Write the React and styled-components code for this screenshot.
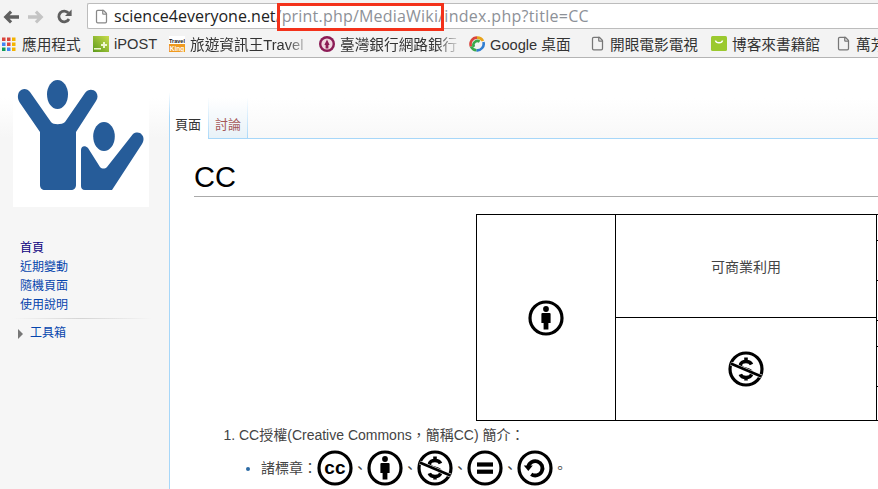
import React from 'react'
import styled, { createGlobalStyle } from 'styled-components'
import { File } from 'lucide-react'

const Global = createGlobalStyle`
  html, body { margin: 0; padding: 0; height: 100%; overflow: hidden; background: #fff; }
  body { font-family: "Liberation Sans", "Noto Sans CJK TC", sans-serif; }
`

const Page = styled.div`
  width: 878px;
  height: 489px;
  display: flex;
  flex-direction: column;
  overflow: hidden;
`

const Toolbar = styled.div`
  height: 32px;
  flex: none;
  display: flex;
  align-items: center;
  background: #f3f3f3;
`

const NavButton = styled.span`
  display: flex;
  flex: none;
  margin-top: 1px;
  width: ${(p) => p.$w}px;
  justify-content: center;
  color: ${(p) => (p.$off ? '#c4c4c4' : '#5f5f5f')};
`

const Omnibox = styled.div`
  position: relative;
  flex: 1;
  height: 26px;
  box-sizing: border-box;
  background: #fff;
  border: 1px solid #bcbcbc;
  border-right: none;
  border-radius: 2px 0 0 2px;
  display: flex;
  align-items: center;
  padding-left: 6px;
  font-family: "Open Sans", sans-serif;
  font-size: 16px;
  white-space: nowrap;
`

const Host = styled.span`
  color: #222;
  margin-left: 5px;
`

const Path = styled.span`
  color: #8d9198;
  letter-spacing: ${(p) => p.$track}px;
`

const Highlight = styled.span`
  position: absolute;
  left: 189px;
  top: -1px;
  width: 167px;
  height: 28px;
  box-sizing: border-box;
  border: 3px solid #f3321b;
`

const Bookmarks = styled.div`
  height: 26px;
  flex: none;
  display: flex;
  align-items: center;
  padding: 0 0 2px 1px;
  background: #f3f3f3;
  border-bottom: 1px solid #b4b4b4;
  box-sizing: border-box;
  overflow: hidden;
`

const Mark = styled.span`
  display: flex;
  flex: none;
  align-items: center;
  gap: 5px;
  width: ${(p) => p.$w}px;
  font-size: 14.67px;
  color: #333;
  white-space: nowrap;
  overflow: hidden;
  ${(p) => p.$fade && `
    -webkit-mask-image: linear-gradient(to right, #000 78%, transparent 95%);
    mask-image: linear-gradient(to right, #000 78%, transparent 95%);
  `}
`

const Body = styled.div`
  flex: 1;
  display: flex;
  min-height: 0;
`

const Sidebar = styled.aside`
  width: 170px;
  flex: none;
  box-sizing: border-box;
  background: linear-gradient(#fff 40px, #f6f6f6 80px);
  border-right: 1px solid;
  border-image: linear-gradient(#fff 35px, #a7d7f9 60px) 1;
  padding-top: 17px;
`

const Logo = styled.div`
  width: 136px;
  height: 132px;
  margin-left: 13px;
  background: #fff;
`

const Menu = styled.nav`
  margin: 32px 0 0 20px;
  display: flex;
  flex-direction: column;
  font-size: 12px;
  line-height: 19px;
`

const MenuLink = styled.span`
  color: ${(p) => (p.$visited ? '#0b0080' : '#0645ad')};
`

const Toolbox = styled.div`
  width: 140px;
  margin: 3px 0 0 -8px;
  padding: 6px 0 0 6px;
  box-sizing: border-box;
  background: linear-gradient(to right, transparent, #d4d4d4 50%, transparent) top / 100% 1px no-repeat;
  display: flex;
  align-items: center;
  gap: 7px;
  color: #0645ad;
`

const Triangle = styled.i`
  width: 0;
  height: 0;
  border-style: solid;
  border-width: 5px 0 5px 5px;
  border-color: transparent transparent transparent #777;
`

const Content = styled.main`
  flex: 1;
  min-width: 0;
  display: flex;
  flex-direction: column;
`

const TabBar = styled.div`
  height: 81px;
  flex: none;
  box-sizing: border-box;
  display: flex;
  align-items: flex-end;
  background: linear-gradient(#fff 40px, #f8f8f8 80px);
  border-bottom: 1px solid #a7d7f9;
`

const Tab = styled.span`
  box-sizing: border-box;
  padding: 18px 6px 0 ${(p) => (p.$active ? '5px' : '6px')};
  width: ${(p) => (p.$active ? '39px' : 'auto')};
  font-size: 13px;
  line-height: 18px;
  margin-bottom: ${(p) => (p.$active ? '-1px' : '0')};
  height: ${(p) => (p.$active ? '41px' : '40px')};
  color: ${(p) => (p.$active ? '#333' : '#a55858')};
  background: ${(p) => (p.$active ? '#fff' : 'linear-gradient(#fff, #e8f2f8)')};
  border-right: 1px solid;
  border-image: linear-gradient(#fff, #a7d7f9) 1;
`

const Article = styled.div`
  flex: 1;
  padding-left: 24px;
  min-width: 0;
  font-size: 14px;
  color: #444;
`

const Title = styled.h1`
  margin: 20px 0 17px;
  height: 37px;
  font-size: 29px;
  line-height: 36px;
  font-weight: normal;
  color: #000;
  border-bottom: 1px solid #aaa;
`

const Grid = styled.div`
  margin-left: 282px;
  width: 500px;
  height: 207px;
  box-sizing: border-box;
  border: 1px solid #000;
  display: grid;
  grid-template-columns: 138px 262px 1fr;
  grid-template-rows: 102px 1fr;
`

const Cell = styled.div`
  display: flex;
  align-items: center;
  justify-content: center;
  grid-column: ${(p) => p.$col};
  grid-row: ${(p) => p.$row};
  border-left: ${(p) => (p.$left ? '1px solid #000' : 'none')};
  border-right: ${(p) => (p.$right ? '1px solid #000' : 'none')};
  border-top: ${(p) => (p.$top ? '1px solid #000' : 'none')};
`

// next column of the table, only its row lines show at the window edge
const NextColumn = styled.div`
  grid-column: 3;
  grid-row: 1 / 3;
  display: flex;
  flex-direction: column;
`

const NextRow = styled.div`
  flex: none;
  height: ${(p) => p.$h}px;
  border-bottom: 1px solid #000;
`

const Notes = styled.ol`
  margin: 4px 0 0;
  padding: 0 0 0 45px;
  line-height: 20px;
`

const Bullets = styled.ul`
  margin: 5px 0 0;
  padding: 0 0 0 22px;
  list-style: disc;
  color: #2c6ba5;
`

const BulletRow = styled.li`
  height: 36px;
  line-height: 36px;
`

const BulletLine = styled.span`
  display: inline-flex;
  align-items: center;
  color: #444;
  vertical-align: top;
  white-space: nowrap;
`

const BadgeSvg = styled.svg`
  display: block;
  flex: none;
`

const Badge = ({ children }) => (
  <BadgeSvg width="36" height="36" viewBox="0 0 36 36">
    <circle cx="18" cy="18" r="16" fill="#fff" stroke="#000" strokeWidth="3.2" />
    {children}
  </BadgeSvg>
)

const Person = () => (
  <g fill="#000">
    <circle cx="18" cy="9" r="2.9" />
    <path d="M14.400 13h7.200a1 1 0 0 1 1 1v9h-2.200v6.600h-4.800V23h-2.200v-9a1 1 0 0 1 1-1z" />
  </g>
)

const NoDollar = () => (
  <g>
    <path
      d="M23.500 13.500c-.8-2-3-3-5.500-3-3 0-5.600 1.500-5.600 4 0 5 11.200 2.700 11.200 8 0 2.500-2.600 4-5.600 4-2.600 0-4.900-1-5.700-3.100M18 6.500v5M18 25.500v4"
      fill="none"
      stroke="#000"
      strokeWidth="3.600"
    />
    <path d="M2.700 12.500L33.500 25.500" stroke="#fff" strokeWidth="3.600" />
    <path d="M2.700 12.500L33.500 25.500" stroke="#000" strokeWidth="2.800" />
  </g>
)

const Equal = () => (
  <g fill="#000">
    <rect x="10" y="12.400" width="16" height="4.200" />
    <rect x="10" y="19.600" width="16" height="4.200" />
  </g>
)

const Share = () => (
  <g>
    <path d="M11.200 17a7.200 7.200 0 1 1 3 7.200" fill="none" stroke="#000" strokeWidth="3.800" />
    <path d="M6.800 15.400h9l-4.500 5.600z" fill="#000" />
  </g>
)

const CcText = () => (
  <text x="18" y="24" textAnchor="middle" fontSize="19" fontWeight="bold" letterSpacing="0.3" fontFamily="Liberation Sans" fill="#000">cc</text>
)

const LogoArt = () => (
  <svg width="136" height="132" viewBox="13 75 136 132" style={{ display: 'block' }}>
    <g fill="#265c99">
      <ellipse cx="57.500" cy="94.500" rx="10.500" ry="14.500" />
      <ellipse cx="104" cy="136.500" rx="10.800" ry="14.500" />
      <path d="M19 92c3-4 8-4 11 0l21 30c2 3 11 3 14 0l20-29c3-4 8-4 11-1 2 3 2 6 0 9L76 132v53c0 3-2 5-5 5H45c-3 0-5-2-5-5v-53L20 103c-2-3-3-7-1-11z" />
      <path d="M81 150c0-4 4-5 7-2l12 19c2 2 5 2 7 0l26-33c3-2 7-2 9 1 2 2 2 6 0 9l-30 46H85c-3 0-4-2-4-4z" />
    </g>
  </svg>
)

const BackArrow = () => (
  <svg width="16" height="14" viewBox="0 0 16 14" fill="currentColor">
    <path d="M7 0.500l2.200 2.200-2.600 2.600H16v3.400H6.600l2.600 2.600L7 13.500 0.500 7z" />
  </svg>
)

const ForwardArrow = () => (
  <svg width="16" height="14" viewBox="0 0 16 14" fill="currentColor">
    <path d="M9 0.500L6.800 2.700l2.600 2.600H0v3.400h9.400l-2.600 2.600L9 13.500 15.500 7z" />
  </svg>
)

const Reload = () => (
  <svg width="15" height="15" viewBox="0 0 15 15">
    <path d="M12 10a5.400 5.400 0 1 1-0.600-6" fill="none" stroke="currentColor" strokeWidth="2.800" />
    <path d="M14.600 0.500v6.600H8z" fill="currentColor" />
  </svg>
)

const AppsIcon = () => {
  const colors = ['#d9453d', '#d9453d', '#f4b400', '#4285f4', '#d9453d', '#f4b400', '#0f9d58', '#4285f4', '#f4b400']
  return (
    <svg width="16" height="14" viewBox="0 0 16 14">
      {colors.map((c, i) => (
        <rect key={i} x={1 + (i % 3) * 5} y={0.5 + Math.floor(i / 3) * 5} width="3.5" height="3.5" fill={c} />
      ))}
    </svg>
  )
}

const IpostIcon = () => (
  <svg width="16" height="16" viewBox="0 0 16 16">
    <defs>
      <linearGradient id="ipost" x1="0" y1="1" x2="1" y2="0">
        <stop offset="0" stopColor="#5c9a1c" />
        <stop offset="1" stopColor="#c9dc4c" />
      </linearGradient>
    </defs>
    <rect width="16" height="16" fill="url(#ipost)" />
    <path d="M1 12h7v1.500H1zM10 6h2v2h2v2h-2v2h-2v-2H8V8h2z" fill="#eef6cf" />
  </svg>
)

const TravelIcon = () => (
  <svg width="16" height="16" viewBox="0 0 16 16" fontFamily="Liberation Sans" fontWeight="bold" textAnchor="middle">
    <rect width="16" height="8" fill="#fff" />
    <rect y="8" width="16" height="8" fill="#ef9a1f" />
    <text x="8" y="6.500" fill="#222" fontSize="5.500">Travel</text>
    <text x="8" y="14.500" fill="#fff" fontSize="6.500">King</text>
  </svg>
)

const BankIcon = () => (
  <svg width="16" height="16" viewBox="0 0 16 16">
    <circle cx="8" cy="8" r="8" fill="#8c1c56" />
    <circle cx="8" cy="8" r="5.600" fill="#f0d8e0" />
    <path d="M8 3.500l2.600 5.500H9.400v3.500H6.600V9H5.400z" fill="#8c1c56" />
  </svg>
)

const GoogleRing = () => (
  <svg width="16" height="16" viewBox="0 0 16 16" fill="none" strokeWidth="2.600">
    <path d="M2 10.500A6.500 6.500 0 0 1 8 1.600" stroke="#d9453d" />
    <path d="M8 1.600a6.500 6.500 0 0 1 6 3.400" stroke="#e8a31a" />
    <path d="M14.400 6a6.500 6.500 0 0 1-7 8.300" stroke="#2f7dd1" />
    <path d="M7.400 14.300A6.500 6.500 0 0 1 2 10.500" stroke="#3aa84a" />
    <path d="M5 11a4 4 0 0 1 5.600-5.400" stroke="#3aa84a" />
  </svg>
)

const BooksIcon = () => (
  <svg width="16" height="15" viewBox="0 0 16 15">
    <rect width="16" height="15" rx="1.500" fill="#9bc92f" />
    <path d="M4.500 4.500c.5 3 6.500 3 7 0" fill="none" stroke="#fff" strokeWidth="1.500" />
  </svg>
)

export default function App() {
  return (
    <Page>
      <Global />
      <Toolbar>
        <NavButton $w={21}><BackArrow /></NavButton>
        <NavButton $w={29} $off><ForwardArrow /></NavButton>
        <NavButton $w={29}><Reload /></NavButton>
        <NavButton $w={8} />
        <Omnibox>
          <File size={15} color="#888" />
          <Host>science4everyone.net</Host>
          <Path $track={0.2}>/print.php/MediaWiki</Path>
          <Path $track={0.3}>/index.php?title=CC</Path>
          <Highlight />
        </Omnibox>
      </Toolbar>
      <Bookmarks>
        <Mark $w={92}><AppsIcon /><span>應用程式</span></Mark>
        <Mark $w={76}><IpostIcon /><span>iPOST</span></Mark>
        <Mark $w={150} $fade><TravelIcon /><span>旅遊資訊王Travel</span></Mark>
        <Mark $w={150} $fade><BankIcon /><span>臺灣銀行網路銀行</span></Mark>
        <Mark $w={121}><GoogleRing /><span>Google 桌面</span></Mark>
        <Mark $w={121}><File size={15} color="#777" /><span>開眼電影電視</span></Mark>
        <Mark $w={125}><BooksIcon /><span>博客來書籍館</span></Mark>
        <Mark $w={60}><File size={15} color="#777" /><span>萬芳</span></Mark>
      </Bookmarks>
      <Body>
        <Sidebar>
          <Logo><LogoArt /></Logo>
          <Menu>
            <MenuLink $visited>首頁</MenuLink>
            <MenuLink>近期變動</MenuLink>
            <MenuLink>隨機頁面</MenuLink>
            <MenuLink>使用說明</MenuLink>
            <Toolbox><Triangle /><span>工具箱</span></Toolbox>
          </Menu>
        </Sidebar>
        <Content>
          <TabBar>
            <Tab $active>頁面</Tab>
            <Tab>討論</Tab>
          </TabBar>
          <Article>
            <Title>CC</Title>
            <Grid>
              <Cell $col="1" $row="1 / 3"><Badge><Person /></Badge></Cell>
              <Cell $col="2" $row="1" $left $right>可商業利用</Cell>
              <Cell $col="2" $row="2" $left $right $top><Badge><NoDollar /></Badge></Cell>
              <NextColumn>
                <NextRow $h={25} />
                <NextRow $h={39} />
                <NextRow $h={39} />
                <NextRow $h={25} />
                <NextRow $h={39} />
              </NextColumn>
            </Grid>
            <Notes>
              <li>CC授權(Creative Commons，簡稱CC) 簡介：
                <Bullets>
                  <BulletRow>
                    <BulletLine>諸標章：
                      <Badge><CcText /></Badge>、
                      <Badge><Person /></Badge>、
                      <Badge><NoDollar /></Badge>、
                      <Badge><Equal /></Badge>、
                      <Badge><Share /></Badge>。
                    </BulletLine>
                  </BulletRow>
                </Bullets>
              </li>
            </Notes>
          </Article>
        </Content>
      </Body>
    </Page>
  )
}
